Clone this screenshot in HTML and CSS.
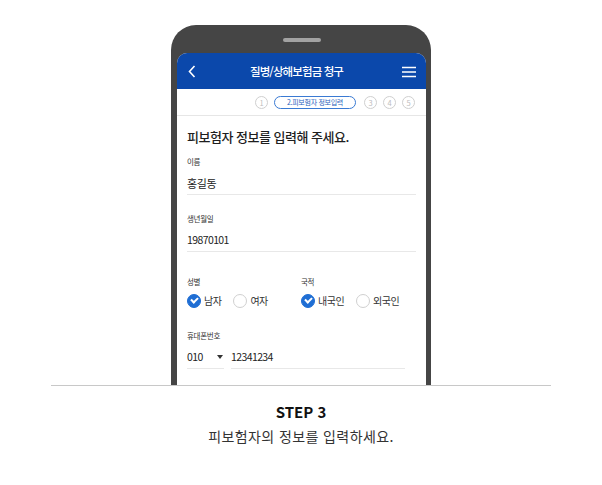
FILE: index.html
```html
<!DOCTYPE html>
<html lang="ko">
<head>
  <meta charset="UTF-8">
  <title>STEP 3 - 피보험자 정보 입력</title>
  <link rel="stylesheet" href="styles.css">
</head>
<body>
  <div class="stage">
    <div class="phone">
      <div class="speaker"></div>
      <div class="screen">
        <header class="appbar">
          <svg class="back" width="8" height="13" viewBox="0 0 8 13">
            <path d="M6.5 1 L1.5 6.5 L6.5 12" fill="none" stroke="#fff" stroke-width="1.6"/>
          </svg>
          <h2 class="appbar-title">질병/상해보험금 청구</h2>
          <svg class="menu" width="14" height="12" viewBox="0 0 14 12">
            <path d="M0 1.5 H14 M0 6 H14 M0 10.5 H14" stroke="#fff" stroke-width="1.6"/>
          </svg>
        </header>

        <div class="steps">
          <span class="step">1</span>
          <span class="step current">2.피보험자 정보입력</span>
          <span class="step">3</span>
          <span class="step">4</span>
          <span class="step">5</span>
        </div>

        <div class="content">
          <h1 class="form-title">피보험자 정보를 입력해 주세요.</h1>

          <div class="field first">
            <label class="field-label">이름</label>
            <div class="field-value">홍길동</div>
          </div>

          <div class="field">
            <label class="field-label">생년월일</label>
            <div class="field-value num">19870101</div>
          </div>

          <div class="field choice-row">
            <div class="choice-col">
              <label class="field-label">성별</label>
              <div class="radios">
                <span class="radio checked"><i></i>남자</span>
                <span class="radio"><i></i>여자</span>
              </div>
            </div>
            <div class="choice-col">
              <label class="field-label">국적</label>
              <div class="radios">
                <span class="radio checked"><i></i>내국인</span>
                <span class="radio"><i></i>외국인</span>
              </div>
            </div>
          </div>

          <div class="field phone-field">
            <label class="field-label">휴대폰번호</label>
            <div class="phone-row">
              <div class="field-value num select">010<span class="caret"></span></div>
              <div class="field-value num number">12341234</div>
            </div>
          </div>
        </div>
      </div>
    </div>
  </div>

  <div class="caption">
    <p class="caption-step">STEP 3</p>
    <p class="caption-text">피보험자의 정보를 입력하세요.</p>
  </div>
</body>
</html>
```

FILE: styles.css
```css
body {
  margin: 0;
  background: #fff;
  font-family: "Noto Sans CJK KR", "Noto Sans", sans-serif;
  color: #222;
}

.stage {
  width: 500px;
  margin: 0 auto;
  padding-top: 25px;
  border-bottom: 1px solid #c8c8c8;
  display: flex;
  justify-content: center;
}

.phone {
  box-sizing: border-box;
  width: 260px;
  height: 360px;
  background: #454545;
  border-radius: 25px 25px 0 0;
  padding: 0 5px 0 6px;
  display: flex;
  flex-direction: column;
  overflow: hidden;
}

.speaker {
  width: 38px;
  height: 4px;
  border-radius: 2px;
  background: #a2a2a2;
  margin: 13px auto 11px;
}

.screen {
  flex: 1;
  background: #fff;
  border-radius: 10px 10px 0 0;
  overflow: hidden;
}

.appbar {
  height: 36px;
  background: #0b48ab;
  display: flex;
  align-items: center;
  padding: 0 10px 0 11px;
}

.appbar-title {
  flex: 1;
  margin: 0;
  text-align: center;
  color: #fff;
  font-size: 11.5px;
  font-weight: 500;
  letter-spacing: -0.9px;
  padding-right: 5px;
}

.menu {
  margin-top: 1px;
}

.steps {
  height: 26px;
  border-bottom: 1px solid #e6e6e6;
  display: flex;
  align-items: center;
  justify-content: flex-end;
  gap: 6px;
  padding-right: 11px;
}

.step {
  width: 11px;
  height: 11px;
  border: 1px solid #cfcfcf;
  border-radius: 7px;
  color: #bdbdbd;
  font-size: 7.5px;
  line-height: 11px;
  text-align: center;
}

.step.current {
  width: 80px;
  border-color: #3a7ad3;
  color: #2a64bd;
  font-size: 7px;
  letter-spacing: -0.3px;
  margin-right: 2px;
}

.content {
  padding: 11px 10px 0;
}

.form-title {
  margin: 0;
  font-size: 13px;
  font-weight: 500;
  line-height: 20px;
  letter-spacing: -0.5px;
  color: #1e1e1e;
}

.field {
  margin-top: 18px;
}

.field.first {
  margin-top: 9px;
}

.field-label {
  display: block;
  font-size: 7.5px;
  line-height: 12px;
  color: #333;
  letter-spacing: -0.3px;
}

.field-value {
  margin-top: 5px;
  font-size: 11px;
  line-height: 20px;
  letter-spacing: -0.4px;
  color: #222;
  padding-bottom: 1px;
  border-bottom: 1px solid #e8e8e8;
}

.field-value.num {
  font-size: 10.5px;
  letter-spacing: -0.6px;
}

.choice-row {
  display: grid;
  grid-template-columns: 114px 1fr;
  margin-top: 24px;
}

.radios {
  display: flex;
  gap: 12px;
  margin-top: 5px;
}

.radio {
  display: flex;
  align-items: center;
  gap: 3px;
  font-size: 10px;
  line-height: 16px;
  letter-spacing: -0.5px;
  color: #333;
}

.radio i {
  width: 12px;
  height: 12px;
  border: 1px solid #d0d0d0;
  border-radius: 50%;
  background: #fff;
  position: relative;
}

.radio.checked i {
  background: #1f6ed4;
  border-color: #1f6ed4;
}

.radio.checked i::after {
  content: "";
  position: absolute;
  left: 3px;
  top: 2px;
  width: 5px;
  height: 3px;
  border-left: 2px solid #fff;
  border-bottom: 2px solid #fff;
  transform: rotate(-45deg);
}

.phone-field {
  margin-top: 21px;
}

.phone-row {
  display: flex;
  gap: 7px;
}

.select {
  width: 37px;
  display: flex;
  justify-content: space-between;
  align-items: center;
}

.caret {
  width: 0;
  height: 0;
  border-left: 3px solid transparent;
  border-right: 3px solid transparent;
  border-top: 4px solid #333;
  margin-right: 1px;
}

.number {
  width: 174px;
}

.caption {
  text-align: center;
  padding-top: 15px;
}

.caption p {
  margin: 0;
}

.caption-step {
  font-size: 15px;
  font-weight: 700;
  line-height: 22px;
  color: #111;
}

.caption-text {
  font-size: 14px;
  line-height: 20px;
  letter-spacing: 0.4px;
  color: #333;
  margin-top: 3px !important;
}
```
